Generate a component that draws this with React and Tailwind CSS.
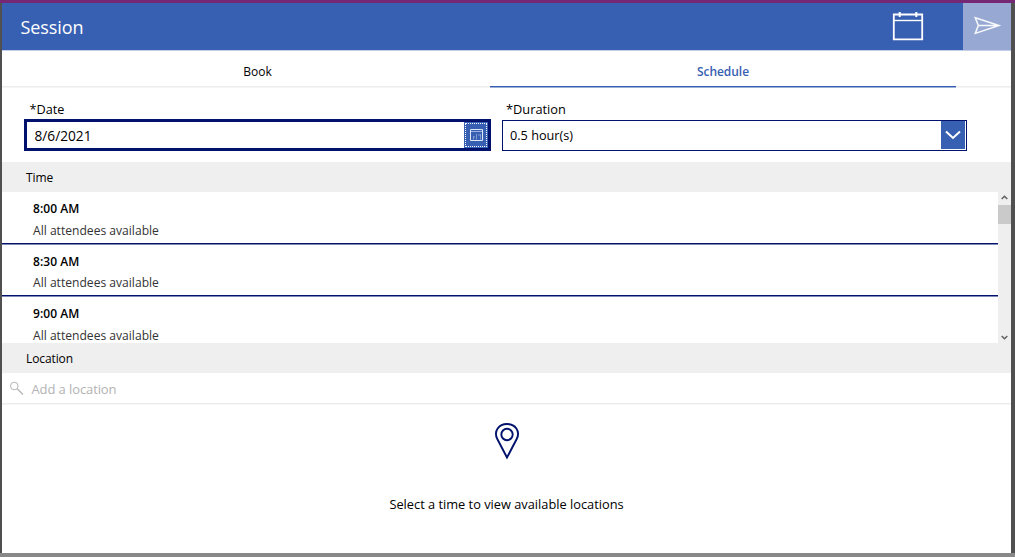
const slots = [
  { time: "8:00 AM", height: "h-[52px]", pad: "pt-[7px]", gap: "mt-[2px]" },
  { time: "8:30 AM", height: "h-[52px]", pad: "pt-[8px]", gap: "mt-[1px]" },
  { time: "9:00 AM", height: "h-[53px]", pad: "pt-[8px]", gap: "mt-[2px]" },
];

function Header() {
  return (
    <header className="flex h-12 shrink-0 border-b border-[#c3cfe8] bg-[#3860b2]">
      <h1 className="flex-1 pl-[18.5px] text-[18px] leading-[49px] tracking-[-0.08px] text-white">Session</h1>
      <button className="flex w-[110px] justify-center" aria-label="Calendar">
        <svg className="mt-[8px]" width="32" height="30" viewBox="0 0 32 30" fill="none" stroke="#fff">
          <path d="M1.8 3.5H30.2V28.3H1.8Z" strokeWidth="1.8" />
          <path d="M1 9.5H31" strokeWidth="1.4" />
          <path d="M7.7 1V6M24.3 1V6" strokeWidth="2" />
        </svg>
      </button>
      <button className="flex w-[48px] bg-[#97a9d3]" aria-label="Send">
        <svg className="mt-[13px] ml-[11px]" width="28" height="19" viewBox="0 0 28 19" fill="none" stroke="#f7f9fd" strokeWidth="1.5">
          <path d="M1.3 1.7L25 9.5L1.3 17.4L4.3 9.5ZM4.3 9.5H25" />
        </svg>
      </button>
    </header>
  );
}

function Tabs() {
  return (
    <nav className="flex h-9 shrink-0 pl-[23px] text-center text-[12px] leading-[41px] shadow-[0_1px_0_#f5f5f5,inset_0_-1px_0_#ededed]">
      <div className="w-[465px]">Book</div>
      <div className="w-[466px] border-b border-[#3860b2] font-semibold tracking-[-0.05px] text-[#3860b2] shadow-[0_1px_0_#9bafd8]">Schedule</div>
    </nav>
  );
}

function Fields() {
  return (
    <section className="mt-px flex h-[74px] shrink-0 items-start pl-[22px]">
      <div className="w-[467px]">
        <label className="mt-[11px] block h-[20px] pl-[5.5px] text-[12.7px] leading-[20px]">*Date</label>
        <div className="flex h-[32px] border-[3px] border-[#00126b]">
          <div className="flex-1 pl-[7.5px] text-[13.7px] leading-[28px]">8/6/2021</div>
          <button className="flex w-[24px] items-center justify-center bg-[#3860b2] outline-dotted outline-1 -outline-offset-2 outline-white" aria-label="Pick a date">
            <svg className="ml-px" width="14" height="14" viewBox="0 0 14 14" fill="none" stroke="#dfe7f6">
              <path d="M.5 1.5H12.5V12.5H.5Z" />
              <path d="M1 3.5H12" stroke="#9db2de" />
              <path d="M3.5 8V11.5M6.5 6V11.5M10.5 6V11.5M3 9H5M8 7H11" stroke="#7f9ad0" />
            </svg>
          </button>
        </div>
      </div>
      <div className="ml-[11px] w-[465px]">
        <label className="mt-[11px] block h-[21px] pl-[4px] text-[12.8px] leading-[20px]">*Duration</label>
        <div className="flex h-[31px] border border-[#00126b] pr-px">
          <div className="flex-1 pl-[7px] text-[12.7px] leading-[28px]">0.5 hour(s)</div>
          <button className="flex h-[28px] w-[24px] items-center justify-center bg-[#3860b2]" aria-label="Open durations">
            <svg width="16" height="10" viewBox="0 0 16 10" fill="none" stroke="#fff" strokeWidth="2">
              <path d="M1 1.5L8 8L15 1.5" />
            </svg>
          </button>
        </div>
      </div>
    </section>
  );
}

function SectionBar({ children }) {
  return <h2 className="h-[30px] shrink-0 bg-[#efefef] pl-[24px] text-[12px] leading-[31px] tracking-[-0.1px]">{children}</h2>;
}

function TimeList() {
  return (
    <section className="flex h-[151px] shrink-0 overflow-hidden">
      <ul className="w-[996px]">
        {slots.map(({ time, height, pad, gap }) => (
          <li key={time} className={`${height} ${pad} border-b border-[#00126b] pl-[31px] shadow-[0_1px_0_#8088b5]`}>
            <div className="text-[12px] leading-[20px] font-semibold tracking-[0.06px]">{time}</div>
            <div className={`${gap} text-[12.1px] leading-[20px] text-[#333]`}>All attendees available</div>
          </li>
        ))}
      </ul>
      <div className="flex w-[13px] flex-col items-center bg-[#efefef]">
        <svg className="mt-[3px] mb-[5px] shrink-0" width="7" height="5" viewBox="0 0 7 5" fill="none" stroke="#606060" strokeWidth="1.5">
          <path d="M.7 4L3.5 1.2L6.3 4" />
        </svg>
        <div className="h-[19px] w-full bg-[#cacaca]" />
        <svg className="mt-auto mb-[3px]" width="7" height="5" viewBox="0 0 7 5" fill="none" stroke="#606060" strokeWidth="1.5">
          <path d="M.7 1L3.5 3.8L6.3 1" />
        </svg>
      </div>
    </section>
  );
}

function LocationSearch() {
  return (
    <div className="flex h-[31px] shrink-0 border-b border-[#ececec] shadow-[0_1px_0_#f6f6f6]">
      <svg className="mt-[8px] ml-[7px]" width="15" height="15" viewBox="0 0 15 15" fill="none" stroke="#b5b5b5">
        <circle cx="5.3" cy="5" r="3.8" />
        <path d="M8.2 7.8L14 13.5" strokeWidth="1.3" />
      </svg>
      <span className="ml-[7.5px] text-[13px] leading-[32px] tracking-[-0.1px] text-[#b3b3b3]">Add a location</span>
    </div>
  );
}

export default function App() {
  return (
    <div className="flex h-[557px] w-[1015px] flex-col overflow-hidden border-t-[3px] border-t-[#762774] bg-[#505050] pl-[2px] font-['Open_Sans',sans-serif] text-black">
      <main className="flex h-[550px] w-[1009px] flex-col bg-white">
        <Header />
        <Tabs />
        <Fields />
        <SectionBar>Time</SectionBar>
        <TimeList />
        <SectionBar>Location</SectionBar>
        <LocationSearch />
        <section className="flex flex-1 flex-col items-center">
          <svg className="mt-[18px]" width="26" height="38" viewBox="0 0 26 38" fill="none" stroke="#00126b" strokeWidth="1.9">
            <path d="M13 35.5L3.3 17C-.7 9 5 2 13 2S26.7 9 22.7 17Z" />
            <circle cx="13" cy="12.5" r="5.7" />
          </svg>
          <p className="mt-[34px] text-[12.8px] leading-[20px]">Select a time to view available locations</p>
        </section>
      </main>
      <div className="-ml-[2px] h-[4px] shrink-0 bg-[#888]" />
    </div>
  );
}
